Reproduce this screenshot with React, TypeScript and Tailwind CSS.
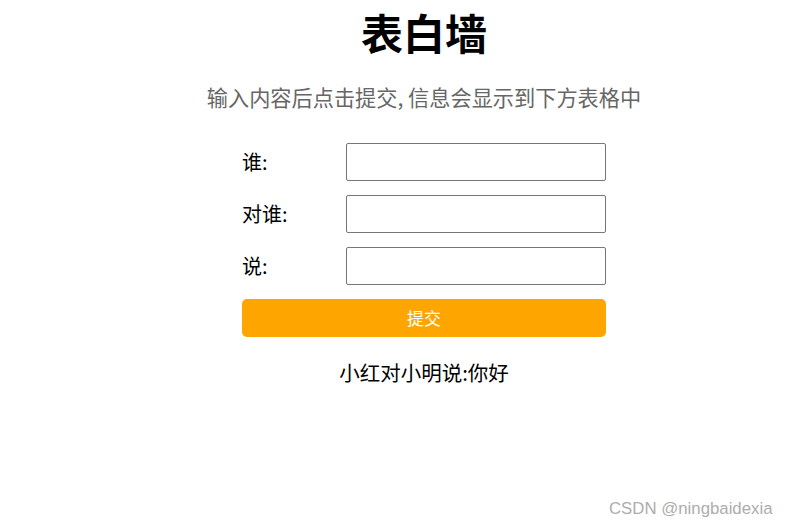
import React from "react";

export default function App() {
  const font = { fontFamily: '"Noto Sans CJK SC", "Noto Sans", sans-serif' };
  const rows = ["谁:", "对谁:", "说:"];
  return (
    <div className="relative w-[786px] h-[527px] overflow-hidden bg-white" style={font}>
      <div className="w-[848px] flex flex-col items-center">
        <h1 className="mt-[11px] text-[42px] leading-[42px] font-bold text-black">表白墙</h1>
        <p className="mt-[33px] text-[21.2px] leading-[22px] text-[#666666] whitespace-nowrap">
          输入内容后点击提交, 信息会显示到下方表格中
        </p>
        <div className="mt-[35px] w-[364px] flex flex-col gap-[14px]">
          {rows.map((r) => (
            <div key={r} className="flex items-center h-[38px]">
              <span className="w-[104px] text-[20px] leading-[20px] text-black">{r}</span>
              <input
                type="text"
                className="w-[260px] h-[38px] border border-[#767676] rounded-[2px] outline-none"
              />
            </div>
          ))}
          <button className="h-[38px] w-[364px] bg-[#ffa500] rounded-[5px] text-white text-[17px] leading-[38px]">
            提交
          </button>
        </div>
        <div className="mt-[23px] text-[20.5px] leading-[24px] text-black">小红对小明说:你好</div>
      </div>
      <div
        className="absolute left-[609px] top-[498px] text-[16.8px] leading-[22px] text-[#adadad]"
        style={{ fontFamily: '"Liberation Sans", Arial, sans-serif' }}
      >
        CSDN @ningbaidexia
      </div>
    </div>
  );
}
